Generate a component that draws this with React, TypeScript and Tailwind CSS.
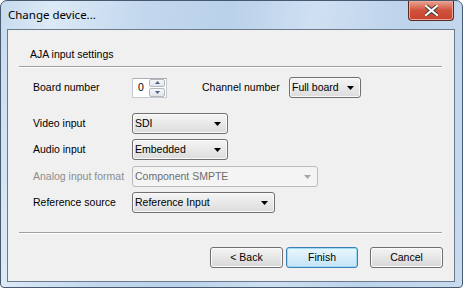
import React from "react";

function Arrow({ c = "#000" }: { c?: string }) {
  return (
    <svg width="7" height="4" viewBox="0 0 7 4" className="shrink-0">
      <path d="M0 0H7L3.5 4Z" fill={c} />
    </svg>
  );
}

function Combo({ text, w, disabled }: { text: string; w: string; disabled?: boolean }) {
  return (
    <div
      className={`${w} h-[21px] rounded-[3px] border flex items-center pl-[2px] pr-[6px] ${
        disabled
          ? "border-[#b8bcc0] bg-[#f4f4f4] text-[#6d6d6d]"
          : "border-[#707070] bg-gradient-to-b from-[#f5f5f5] to-[#dcdcdc] text-black shadow-[inset_0_0_0_1px_#fafafa]"
      }`}
    >
      <span className="flex-1 whitespace-nowrap overflow-hidden">{text}</span>
      <Arrow c={disabled ? "#a6a6a6" : "#000"} />
    </div>
  );
}

function Label({ text, disabled }: { text: string; disabled?: boolean }) {
  return (
    <div className={`w-[99px] whitespace-nowrap ${disabled ? "text-[#8d8d8d]" : "text-black"}`}>{text}</div>
  );
}

function Btn({ text, primary, w }: { text: string; primary?: boolean; w: string }) {
  return (
    <div
      className={`${w} h-[21px] rounded-[3px] border flex items-center justify-center ${
        primary
          ? "border-[#3c7fb1] bg-gradient-to-b from-[#eaf6fd] to-[#c4e4f7] shadow-[inset_0_0_0_1px_#9ed9f5]"
          : "border-[#707070] bg-gradient-to-b from-[#f4f4f4] to-[#d8d8d8] shadow-[inset_0_0_0_1px_#fbfbfb]"
      }`}
    >
      {text}
    </div>
  );
}

export default function App() {
  return (
    <div className="w-[463px] h-[288px] bg-white">
      <div className="w-[463px] h-[288px] rounded-t-[7px] rounded-b-[4px] border border-[#47596e] flex flex-col bg-[linear-gradient(100deg,#c6daef_0%,#dce9f6_10%,#c3d8ee_28%,#b9d1ea_45%,#cfe0f2_62%,#bcd3eb_80%,#c8dbef_100%)]">
        {/* title bar */}
        <div className="h-[28px] flex items-start shrink-0">
          <div className="self-center pl-[7px] font-['Noto_Sans',sans-serif] text-[11.5px] leading-[14px] text-black">
            Change device...
          </div>
          <div className="ml-auto mr-[8px] w-[46px] h-[20px] rounded-b-[4px] border border-t-0 border-[#5a2a22] bg-gradient-to-b from-[#e8a391] via-[#d0523c] to-[#c7432d] flex items-center justify-center shadow-[inset_0_0_0_1px_#eba89a]">
            <svg width="13" height="11" viewBox="0 0 13 11">
              <path
                d="M1 1L12 10M12 1L1 10"
                stroke="#3b3b3b"
                strokeWidth="4"
                strokeLinecap="square"
              />
              <path d="M1 1L12 10M12 1L1 10" stroke="#ffffff" strokeWidth="2.2" strokeLinecap="square" />
            </svg>
          </div>
        </div>
        {/* client area */}
        <div className="ml-[6px] mr-[7px] mb-[5px] flex-1 border border-[#6b7b8c] bg-[#f0f0f0] flex flex-col font-['Liberation_Sans',Arial,sans-serif] text-[10.5px] leading-[13px]">
          <div className="pt-[17px] pl-[22px] leading-[14px] text-black">AJA input settings</div>
          <div className="mt-[5px] ml-[11px] mr-[12px] border-t border-[#a0a0a0] border-b border-b-white" />
          <div className="pl-[25px] flex flex-col">
            {/* row 1 */}
            <div className="mt-[9px] h-[21px] flex items-center">
              <Label text="Board number" />
              <div className="w-[35px] h-[20px] border border-[#c5c9d0] border-t-[#abadb3] bg-white flex items-center">
                <span className="flex-1 pl-[5px]">0</span>
                <div className="w-[16px] h-[18px] flex flex-col gap-[1px] mr-px">
                  <div className="h-[8.5px] flex-1 rounded-[2px] border border-[#b3b8c1] bg-gradient-to-b from-[#f6f6f6] to-[#e2e4e8] flex items-center justify-center">
                    <svg width="5" height="3" viewBox="0 0 5 3">
                      <path d="M0 3H5L2.5 0Z" fill="#4c5f84" />
                    </svg>
                  </div>
                  <div className="h-[8.5px] flex-1 rounded-[2px] border border-[#b3b8c1] bg-gradient-to-b from-[#f6f6f6] to-[#e2e4e8] flex items-center justify-center">
                    <svg width="5" height="3" viewBox="0 0 5 3">
                      <path d="M0 0H5L2.5 3Z" fill="#4c5f84" />
                    </svg>
                  </div>
                </div>
              </div>
              <div className="ml-[35px] w-[87px] whitespace-nowrap">Channel number</div>
              <Combo text="Full board" w="w-[72px]" />
            </div>
            <div className="mt-[15px] h-[21px] flex items-center">
              <Label text="Video input" />
              <Combo text="SDI" w="w-[96px]" />
            </div>
            <div className="mt-[5px] h-[21px] flex items-center">
              <Label text="Audio input" />
              <Combo text="Embedded" w="w-[96px]" />
            </div>
            <div className="mt-[6px] h-[21px] flex items-center">
              <Label text="Analog input format" disabled />
              <Combo text="Component SMPTE" w="w-[186px]" disabled />
            </div>
            <div className="mt-[5px] h-[21px] flex items-center">
              <Label text="Reference source" />
              <Combo text="Reference Input" w="w-[143px]" />
            </div>
          </div>
          <div className="mt-[19px] ml-[11px] mr-[12px] border-t border-[#a0a0a0] border-b border-b-white" />
          <div className="mt-[13px] pr-[11px] flex justify-end text-black">
            <Btn text="< Back" w="w-[73px]" />
            <div className="ml-[3px]">
              <Btn text="Finish" primary w="w-[72px]" />
            </div>
            <div className="ml-[12px]">
              <Btn text="Cancel" w="w-[73px]" />
            </div>
          </div>
        </div>
      </div>
    </div>
  );
}
